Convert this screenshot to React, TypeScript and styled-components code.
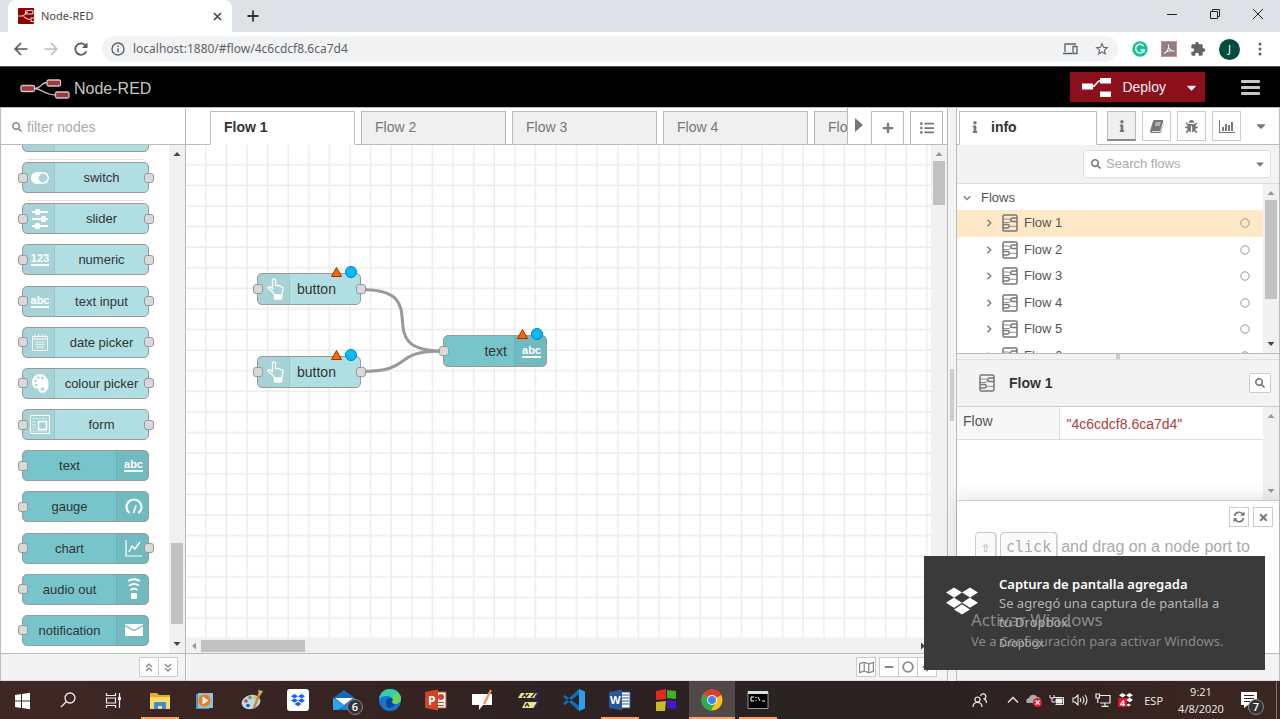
import React from 'react';
import styled, { createGlobalStyle, css } from 'styled-components';
import {
  FaBug,
  FaCaretDown,
  FaDropbox,
  FaInfo,
  FaListUl,
  FaPlus,
  FaMinus,
  FaSearch,
  FaTimes,
  FaRegMap,
} from 'react-icons/fa';
import { MdExtension, MdStarBorder } from 'react-icons/md';

const sans = '"Liberation Sans", Arial, sans-serif';
const system = '"Noto Sans", "Open Sans", sans-serif';
const line = '#bbbbbb';
const panel = '#f3f3f3';

const GlobalStyle = createGlobalStyle`
  * { box-sizing: border-box; }
  body { margin: 0; font: 14px/20px ${sans}; color: #555; background: #fff; }
  button { font: inherit; color: inherit; background: none; border: 0; padding: 0; cursor: pointer; }
  input { font: inherit; color: inherit; background: none; border: 0; padding: 0; outline: 0; min-width: 0; }
  input::placeholder { color: #aaa; opacity: 1; }
  ul { margin: 0; padding: 0; list-style: none; }
  svg { display: block; flex: none; }
`;

const Page = styled.div`
  position: relative;
  display: flex;
  flex-direction: column;
  height: 100vh;
  overflow: hidden;
`;

/* ---------- browser window ---------- */

const TabStrip = styled.div`
  display: flex;
  height: 32px;
  flex: none;
  padding: 0 1px 0 8px;
  background: #dee1e6;
  font-family: ${system};
`;

const BrowserTab = styled.div`
  display: flex;
  align-items: center;
  width: 224px;
  padding: 0 10px;
  gap: 7px;
  border-radius: 8px 8px 0 0;
  background: #fff;
  color: #45494d;
  font-size: 11px;
  span { flex: 1; }
`;

const StripButton = styled.button<{ $width: number }>`
  display: flex;
  align-items: center;
  justify-content: center;
  width: ${(p) => p.$width}px;
  color: #222;
`;

const WindowControls = styled.div`
  display: flex;
  height: 27px;
  margin-left: auto;
`;

const AddressRow = styled.div`
  display: flex;
  align-items: center;
  height: 34px;
  flex: none;
  padding: 0 13px 0 6px;
  background: #fff;
  font-family: ${system};
  color: #5f6368;
`;

const NavButton = styled.button<{ $faded?: boolean }>`
  display: flex;
  justify-content: center;
  width: 30px;
  color: ${(p) => (p.$faded ? '#bcbec1' : '#55595e')};
`;

const AddressBox = styled.label`
  display: flex;
  align-items: center;
  flex: 1;
  height: 26px;
  margin-left: 6px;
  padding: 0 8px 0 9px;
  gap: 8px;
  border-radius: 13px;
  background: #f1f3f4;
  font-size: 12px;
  input { flex: 1; }
`;

const Extensions = styled.div`
  display: flex;
  align-items: center;
  gap: 13px;
  margin-left: 14px;
`;

const Avatar = styled.span`
  display: flex;
  align-items: center;
  justify-content: center;
  width: 21px;
  height: 21px;
  border-radius: 50%;
  background: #004d40;
  color: #fff;
  font-size: 11px;
`;

/* ---------- editor header ---------- */

const Header = styled.header`
  display: flex;
  align-items: center;
  height: 42px;
  flex: none;
  padding: 0 20px;
  border-top: 1px solid #555;
  border-bottom: 1px solid ${line};
  background: #000;
`;

const Brand = styled.div`
  display: flex;
  align-items: center;
  flex: 1;
  gap: 4px;
  padding-top: 4px;
  color: #c7c7c7;
  font-size: 16px;
`;

const DeployGroup = styled.div`
  display: flex;
  height: 30px;
  margin-right: 36px;
  background: #8c101c;
  color: #eee;
`;

const DeployButton = styled.button`
  display: flex;
  align-items: center;
  gap: 11px;
  padding: 0 12px;
`;

const DeployMenu = styled.button`
  display: flex;
  align-items: center;
  justify-content: center;
  width: 27px;
`;

const MenuButton = styled.button`
  display: flex;
  flex-direction: column;
  gap: 3px;
  width: 19px;
  i { height: 3px; background: #c7c7c7; border-radius: 1px; }
`;

/* ---------- editor shell ---------- */

const Editor = styled.main`
  display: grid;
  grid-template-columns: 186px minmax(0, 1fr) 9px 323px;
  flex: 1;
  min-height: 0;
  background: #fff;
`;

const Pane = styled.section`
  display: flex;
  flex-direction: column;
  min-width: 0;
  min-height: 0;
  border-right: 1px solid ${line};
`;

const PalettePane = styled(Pane)`
  border-left: 1px solid ${line};
`;

const Footer = styled.footer<{ $inset?: boolean }>`
  display: flex;
  align-items: center;
  justify-content: flex-end;
  height: 28px;
  flex: none;
  padding: 0 ${(p) => (p.$inset ? 10 : 7)}px;
  border-top: 1px solid ${line};
  border-bottom: 1px solid #ddd;
  background: ${panel};
`;

const FooterButton = styled.button`
  display: flex;
  align-items: center;
  justify-content: center;
  width: 20px;
  height: 20px;
  border: 1px solid #ccc;
  background: #fff;
  color: #888;
  & + & { margin-left: -1px; }
`;

const MapButton = styled(FooterButton)`
  margin-right: 4px;
`;

const Separator = styled.div`
  display: flex;
  align-items: center;
  justify-content: center;
  border-right: 1px solid ${line};
  background: ${panel};
  &::after { content: ''; width: 4px; height: 52px; background: #ccc; border-radius: 1px; }
`;

/* ---------- scroll bars ---------- */

const ScrollTrack = styled.div<{ $row?: boolean }>`
  display: flex;
  flex: none;
  flex-direction: ${(p) => (p.$row ? 'row' : 'column')};
  align-items: center;
  justify-content: space-between;
  ${(p) => (p.$row ? 'height: 14px; padding: 0 4px;' : 'width: 16px; padding: 5px 0;')}
  background: #f1f1f1;
`;

const ScrollRoom = styled.div<{ $row?: boolean; $start: number; $size: number }>`
  flex: 1;
  display: flex;
  &::before {
    content: '';
    background: #c1c1c1;
    ${(p) =>
      p.$row
        ? css`width: ${p.$size}px; height: 12px; margin-left: ${p.$start}px;`
        : css`width: 12px; height: ${p.$size}px; margin-top: ${p.$start}px;`}
  }
`;

type Dir = 'up' | 'down' | 'left' | 'right';
const arrowTurn: Record<Dir, number> = { up: 0, right: 90, down: 180, left: 270 };

function Arrow({ dir, faded }: { dir: Dir; faded?: boolean }) {
  return (
    <svg width="8" height="8" viewBox="0 0 8 8">
      <path d="M4 2 7.5 6H.5Z" fill={faded ? '#999' : '#444'} transform={`rotate(${arrowTurn[dir]} 4 4)`} />
    </svg>
  );
}

function ScrollBar(props: { row?: boolean; start: number; size: number; first?: boolean; last?: boolean }) {
  return (
    <ScrollTrack $row={props.row}>
      <Arrow dir={props.row ? 'left' : 'up'} faded={props.first} />
      <ScrollRoom $row={props.row} $start={props.start} $size={props.size} />
      <Arrow dir={props.row ? 'right' : 'down'} faded={props.last} />
    </ScrollTrack>
  );
}

/* ---------- palette ---------- */

const FilterRow = styled.label`
  display: flex;
  align-items: center;
  gap: 5px;
  height: 37px;
  flex: none;
  padding: 1px 11px 0;
  border-bottom: 1px solid ${line};
  color: #888;
  input { flex: 1; }
`;

const ScrollArea = styled.div`
  display: flex;
  flex: 1;
  min-height: 0;
  overflow: hidden;
`;

const PaletteList = styled.ul`
  display: flex;
  flex-direction: column;
  justify-content: space-between;
  flex: 1;
  margin-top: -24px;
  padding: 0 20px 7px 21px;
`;

const NodeBox = styled.div<{ $dark?: boolean; $small?: boolean }>`
  position: relative;
  display: flex;
  flex-direction: ${(p) => (p.$dark ? 'row-reverse' : 'row')};
  height: ${(p) => (p.$small ? 31 : 32)}px;
  flex: none;
  border: 1px solid #999;
  border-radius: 5px;
  background: ${(p) => (p.$dark ? '#77c5cb' : '#b0dfe3')};
  color: #333;
  font-size: ${(p) => (p.$small ? 13 : 14)}px;
  line-height: ${(p) => (p.$small ? 30 : 30)}px;
`;

const NodeIcon = styled.span<{ $dark?: boolean }>`
  display: flex;
  align-items: center;
  justify-content: center;
  width: 32px;
  ${(p) => (p.$dark ? 'padding-left: 2px; border-left' : 'padding-left: 3px; border-right')}: 1px solid rgba(0, 0, 0, 0.06);
  background: rgba(0, 0, 0, 0.05);
  color: #fff;
`;

const NodeLabel = styled.span<{ $align?: string }>`
  flex: 1;
  text-align: ${(p) => p.$align ?? 'center'};
  padding: 0 ${(p) => (p.$align ? 7 : 0)}px;
  white-space: nowrap;
`;

const Port = styled.i<{ $side: 'left' | 'right' }>`
  position: absolute;
  top: calc(50% - 5px);
  ${(p) => (p.$side === 'left' ? 'left: -5px' : 'right: -6px')};
  width: 10px;
  height: 10px;
  border: 1px solid #999;
  border-radius: 3px;
  background: #d9d9d9;
`;

const PaletteItem = styled.li<{ $ruled?: boolean }>`
  position: relative;
  ${(p) =>
    p.$ruled &&
    css`
      &::before {
        content: '';
        position: absolute;
        top: -3px;
        left: 5px;
        right: 5px;
        height: 1px;
        background: #fbdcc8;
      }
    `}
`;

const Word = styled.span`
  padding-bottom: 1px;
  border-bottom: 2px solid #fff;
  font: bold 11px/10px ${sans};
`;

const icons: Record<string, React.ReactNode> = {
  blank: null,
  switch: (
    <svg width="18" height="12" viewBox="0 0 18 12">
      <rect width="18" height="12" rx="6" fill="#fff" />
      <circle cx="12" cy="6" r="4.4" fill="#a7d4d8" />
    </svg>
  ),
  slider: (
    <svg width="16" height="20" viewBox="0 0 16 20" fill="#fff">
      <path d="M0 2h16v2H0zM0 9h16v2H0zM0 16h16v2H0z" />
      <rect x="3" width="5" height="6" rx="1.5" />
      <rect x="9" y="7" width="5" height="6" rx="1.5" />
      <rect x="3" y="14" width="5" height="6" rx="1.5" />
    </svg>
  ),
  numeric: <Word>123</Word>,
  abc: <Word>abc</Word>,
  date: (
    <svg width="16" height="17" viewBox="0 0 16 17" fill="none" stroke="#fff">
      <path d="M.5 2.5h15v14H.5zM.5 5h15M3 .5V3M6.5.5V3M10 .5V3M13 .5V3" />
      <path d="M3 8h10M3 10.5h10M3 13h10M5.5 7v8M8 7v8M10.5 7v8" opacity=".45" />
    </svg>
  ),
  colour: (
    <svg width="17" height="19" viewBox="0 0 17 19">
      <path
        d="M8 0C3.5 0 0 3.8 0 8.3c0 4.2 2.5 6 5 6.2 2 .2 1.5 1.8 2.2 3 .6 1.1 2 1.5 4 1.3 3.4-.4 5.800-4.500 5.300-9.300C16 4 12.600 0 8 0Z"
        fill="#fff"
      />
      <g fill="#a7d4d8">
        <circle cx="4" cy="11" r="1.3" />
        <circle cx="3.6" cy="7" r="1.3" />
        <circle cx="6.3" cy="3.8" r="1.3" />
        <circle cx="10.3" cy="4" r="1.3" />
        <circle cx="10.5" cy="15" r="1.8" />
      </g>
    </svg>
  ),
  form: (
    <svg width="20" height="19" viewBox="0 0 20 19" fill="none" stroke="#fff">
      <path d="M.5.5h19v18H.5z" />
      <path d="M8.5 6.5h8v8h-8z" strokeWidth="1.5" />
      <path d="M2.5 3.5h15M2.5 16h15" strokeDasharray="2 1" opacity=".7" />
      <path d="M2.5 7H6M2.5 10H6M2.5 13H6" opacity=".7" />
    </svg>
  ),
  gauge: (
    <svg width="18" height="17" viewBox="0 0 18 17" fill="none" stroke="#fff">
      <path d="M4.500 15A7.500 7.500 0 1 1 13.500 15" strokeWidth="2.2" />
      <path d="M8.500 15 11 7.500" strokeWidth="1.8" />
    </svg>
  ),
  chart: (
    <svg width="18" height="17" viewBox="0 0 18 17" fill="none" stroke="#fff" strokeWidth="1.2">
      <path d="M1 0v16h16" />
      <path d="M4 12l3-6 3 3 5-7" strokeWidth="1.600" />
    </svg>
  ),
  audio: (
    <svg width="16" height="22" viewBox="0 0 16 22" fill="none" stroke="#fff" strokeWidth="2">
      <path d="M2 3Q8-.5 14 3M3 7.5Q8 4.500 13 7.500M4.500 12Q8 9.500 11.500 12" />
      <rect x="5" y="15" width="6" height="6" rx="1" fill="#fff" stroke="none" />
    </svg>
  ),
  mail: (
    <svg width="18" height="12" viewBox="0 0 18 12">
      <path d="M0 0h18v12H0z" fill="#fff" />
      <path d="M0 1.500 9 6.500 18 1.500" fill="none" stroke="#6eb7bc" strokeWidth="1.2" />
    </svg>
  ),
  hand: (
    <svg width="17" height="22" viewBox="0 0 17 22" fill="none" stroke="#fff" strokeWidth="1.3" strokeLinejoin="round">
      <path d="M5.500 11.500V2.200C5.500.4 8.500.4 8.500 2.200V7.500c1-.6 2-.4 2.600.4 1-.4 1.900-.2 2.300.7 1.500-.1 2.600.6 2.600 2.400L15 17H7.500L5.800 14 1.500 10.800C.2 9.500 1.800 8 3.200 9l2.300 1.600" />
      <path d="M7.500 17.500h7.200V21H7.500z" fill="#fff" />
    </svg>
  ),
};

const palette = [
  { label: '', icon: 'blank' },
  { label: 'switch', icon: 'switch', ruled: true },
  { label: 'slider', icon: 'slider', ruled: true },
  { label: 'numeric', icon: 'numeric' },
  { label: 'text input', icon: 'abc' },
  { label: 'date picker', icon: 'date' },
  { label: 'colour picker', icon: 'colour' },
  { label: 'form', icon: 'form' },
  { label: 'text', icon: 'abc', dark: true },
  { label: 'gauge', icon: 'gauge', dark: true },
  { label: 'chart', icon: 'chart', dark: true, output: true },
  { label: 'audio out', icon: 'audio', dark: true },
  { label: 'notification', icon: 'mail', dark: true },
];

function DoubleChevron({ down }: { down?: boolean }) {
  return (
    <svg width="8" height="9" viewBox="0 0 8 9" fill="none" stroke="#888" strokeWidth="1.3">
      <path d={down ? 'M1 1l3 3 3-3M1 5l3 3 3-3' : 'M1 4l3-3 3 3M1 8l3-3 3 3'} />
    </svg>
  );
}

function Palette() {
  return (
    <PalettePane>
      <FilterRow>
        <FaSearch size={10} />
        <input placeholder="filter nodes" aria-label="filter nodes" />
      </FilterRow>
      <ScrollArea>
        <PaletteList>
          {palette.map((n) => (
            <PaletteItem key={n.label} $ruled={n.ruled}>
              <NodeBox $dark={n.dark} $small>
                <NodeIcon $dark={n.dark}>{icons[n.icon]}</NodeIcon>
                <NodeLabel>{n.label}</NodeLabel>
                {n.label && <Port $side="left" />}
                {n.label && (!n.dark || n.output) && <Port $side="right" />}
              </NodeBox>
            </PaletteItem>
          ))}
        </PaletteList>
        <ScrollBar start={385} size={81} />
      </ScrollArea>
      <Footer>
        <FooterButton aria-label="collapse all"><DoubleChevron /></FooterButton>
        <FooterButton aria-label="expand all"><DoubleChevron down /></FooterButton>
      </Footer>
    </PalettePane>
  );
}

/* ---------- workspace ---------- */

const TabBar = styled.div`
  display: flex;
  align-items: flex-end;
  height: 37px;
  flex: none;
  border-bottom: 1px solid ${line};
`;

const Tabs = styled.div`
  display: flex;
  flex: 1;
  gap: 6px;
  min-width: 0;
  margin-bottom: -1px;
  padding-left: 24px;
  overflow: hidden;
`;

const Tab = styled.button<{ $active?: boolean }>`
  width: 145px;
  flex: none;
  height: 34px;
  padding: 0 13px 2px;
  border: 1px solid ${line};
  border-bottom-color: ${(p) => (p.$active ? '#fff' : line)};
  background: ${(p) => (p.$active ? '#fff' : '#f0f0f0')};
  color: ${(p) => (p.$active ? '#333' : '#777')};
  font-weight: ${(p) => (p.$active ? 'bold' : 'normal')};
  text-align: left;
`;

const TabScroll = styled.button`
  display: flex;
  align-items: center;
  justify-content: center;
  width: 22px;
  height: 36px;
  padding-bottom: 2px;
  border-left: 1px solid ${line};
`;

const TabTool = styled.button`
  display: flex;
  align-items: center;
  justify-content: center;
  width: 33px;
  height: 33px;
  margin: 0 4px 0 2px;
  border: 1px solid ${line};
  border-bottom: 0;
  color: #777;
`;

const CanvasColumn = styled.div`
  display: flex;
  flex-direction: column;
  flex: 1;
  min-width: 0;
`;

const Canvas = styled.div`
  position: relative;
  flex: 1;
  min-height: 0;
  overflow: hidden;
`;

const CanvasSvg = styled.svg`
  position: absolute;
  inset: 0;
  width: 100%;
  height: 100%;
`;

const FlowNode = styled(NodeBox)<{ $x: number; $y: number }>`
  position: absolute;
  left: ${(p) => p.$x}px;
  top: ${(p) => p.$y}px;
  width: 104px;
`;

const Status = styled.svg`
  position: absolute;
  top: -9px;
  right: 2px;
`;

const nodes = [
  { label: 'button', x: 71, y: 128, icon: 'hand' },
  { label: 'button', x: 71, y: 211, icon: 'hand' },
  { label: 'text', x: 257, y: 190, icon: 'abc', dark: true },
];

function Workspace() {
  return (
    <Pane>
      <TabBar>
        <Tabs>
          {[1, 2, 3, 4, 5].map((n) => (
            <Tab key={n} $active={n === 1}>Flow {n}</Tab>
          ))}
        </Tabs>
        <TabScroll aria-label="scroll tabs">
          <svg width="8" height="14" viewBox="0 0 8 14"><path d="M0 0l8 7-8 7z" fill="#777" /></svg>
        </TabScroll>
        <TabTool aria-label="add flow"><FaPlus size={12} /></TabTool>
        <TabTool aria-label="list flows"><FaListUl size={14} /></TabTool>
      </TabBar>
      <ScrollArea>
        <CanvasColumn>
          <Canvas>
            <CanvasSvg>
              <defs>
                <pattern id="grid" width="20.6" height="20.6" patternUnits="userSpaceOnUse">
                  <path d="M19.900 0v20.600M0 19.900h20.600" stroke="#ececec" strokeWidth="1.500" />
                </pattern>
              </defs>
              <rect width="100%" height="100%" fill="url(#grid)" />
              <g fill="none" stroke="#999" strokeWidth="3">
                <path d="M175 144.500C253 144.500 180 206 257 206" />
                <path d="M175 226.500C230 226.500 203 206 257 206" />
              </g>
            </CanvasSvg>
            {nodes.map((n) => (
              <FlowNode key={n.y} $x={n.x} $y={n.y} $dark={n.dark}>
                <NodeIcon $dark={n.dark}>{icons[n.icon]}</NodeIcon>
                <NodeLabel $align={n.dark ? 'right' : 'left'}>{n.label}</NodeLabel>
                <Port $side="left" />
                {!n.dark && <Port $side="right" />}
                <Status width="28" height="14" viewBox="0 0 28 14">
                  <path d="M6.500 2.500 11.500 11.500H1.500Z" fill="#ff6600" stroke="#a03000" />
                  <circle cx="21" cy="7" r="5.500" fill="#00bcff" stroke="#0081b5" />
                </Status>
              </FlowNode>
            ))}
          </Canvas>
          <ScrollBar row start={3} size={104} first />
        </CanvasColumn>
        <ScrollBar start={3} size={44} first />
      </ScrollArea>
      <Footer $inset>
        <MapButton aria-label="navigator"><FaRegMap size={15} /></MapButton>
        <FooterButton aria-label="zoom out"><FaMinus size={10} /></FooterButton>
        <FooterButton aria-label="reset zoom">
          <svg width="12" height="12" viewBox="0 0 12 12"><circle cx="6" cy="6" r="4.800" fill="none" stroke="#888" strokeWidth="1.800" /></svg>
        </FooterButton>
        <FooterButton aria-label="zoom in"><FaPlus size={10} /></FooterButton>
      </Footer>
    </Pane>
  );
}

/* ---------- sidebar ---------- */

const SideTabs = styled.div`
  display: flex;
  height: 37px;
  flex: none;
  align-items: flex-end;
  padding-left: 2px;
  border-bottom: 1px solid ${line};
`;

const SideTab = styled.button`
  display: flex;
  align-items: center;
  gap: 10px;
  width: 138px;
  height: 34px;
  margin: 0 10px -1px 0;
  padding: 0 9px 2px;
  border: 1px solid ${line};
  border-bottom-color: #fff;
  background: #fff;
  color: #333;
  font-weight: bold;
  svg { color: #777; }
`;

const SideTool = styled.button<{ $active?: boolean }>`
  display: flex;
  align-items: center;
  justify-content: center;
  width: 29px;
  height: 30px;
  margin: 0 6px 3px 0;
  border: 1px solid ${(p) => (p.$active ? '#bbb' : '#ccc')};
  ${(p) => p.$active && 'border-bottom: 2px solid #888;'}
  background: ${(p) => (p.$active ? '#efefef' : '#fff')};
  color: #777;
`;

const SideMore = styled.button`
  display: flex;
  align-items: center;
  justify-content: center;
  flex: 1;
  height: 36px;
  padding-right: 4px;
  color: #777;
`;

const SearchRow = styled.div`
  display: flex;
  justify-content: flex-end;
  align-items: center;
  height: 39px;
  flex: none;
  padding-right: 8px;
  border-bottom: 1px solid #ddd;
  background: ${panel};
`;

const SearchBox = styled.label`
  display: flex;
  align-items: center;
  gap: 5px;
  width: 188px;
  height: 28px;
  padding: 0 4px 0 7px;
  border: 1px solid #ddd;
  border-radius: 3px;
  background: #fff;
  color: #777;
  font-size: 13px;
  input { flex: 1; }
`;

const TreeArea = styled(ScrollArea)`
  flex: none;
  height: 169px;
`;

const Tree = styled.div`
  flex: 1;
  font-size: 13px;
`;

const TreeRoot = styled.div`
  display: flex;
  align-items: center;
  gap: 10px;
  height: 26px;
  padding: 2px 0 0 6px;
`;

const TreeList = styled.ul`
  display: grid;
  grid-auto-rows: 1fr;
  height: 159px;
`;

const TreeItem = styled.li<{ $active?: boolean }>`
  display: flex;
  align-items: center;
  padding: 0 13px 0 28px;
  background: ${(p) => (p.$active ? '#ffe8c5' : '#fff')};
  > svg:first-child { margin-right: 9px; }
  span { flex: 1; padding-left: 6px; }
`;

const Splitter = styled.div`
  display: flex;
  justify-content: center;
  height: 7px;
  flex: none;
  border-top: 1px solid ${line};
  border-bottom: 1px solid #ddd;
  background: ${panel};
  &::after { content: ''; width: 4px; background: #ccc; }
`;

const DetailHead = styled.div`
  display: flex;
  align-items: center;
  gap: 14px;
  height: 47px;
  flex: none;
  padding: 0 8px 0 22px;
  border-bottom: 1px solid #ccc;
  background: ${panel};
  color: #333;
  strong { flex: 1; }
`;

const IconButton = styled.button`
  display: flex;
  align-items: center;
  justify-content: center;
  width: 20px;
  height: 20px;
  border: 1px solid #ccc;
  background: #fff;
  color: #777;
`;

const DetailButton = styled(IconButton)`
  width: 22px;
  border-radius: 2px;
`;

const DetailArea = styled(ScrollArea)`
  flex: none;
  height: 93px;
`;

const DetailBody = styled.div`
  flex: 1;
`;

const DetailTable = styled.table`
  width: 100%;
  border-collapse: collapse;
  th, td { height: 32px; padding: 0 6px; border-bottom: 1px solid #ddd; text-align: left; font-weight: normal; }
  th { width: 102px; padding-bottom: 3px; border-right: 1px solid #ddd; background: #f7f7f7; }
  td { padding: 3px 7px 0; color: #b03d3d; }
`;

const Tips = styled.div`
  flex: 1;
  min-height: 0;
  overflow: hidden;
  padding: 6px 6px 0 18px;
  border-top: 1px solid #ccc;
  box-shadow: 0 -4px 16px rgba(0, 0, 0, 0.1);
  background: #fff;
  color: #aaa;
`;

const TipTools = styled.div`
  display: flex;
  justify-content: flex-end;
  gap: 4px;
`;

const TipText = styled.p`
  display: flex;
  align-items: center;
  gap: 4px;
  margin: 5px 0 0;
  font-size: 16px;
  white-space: nowrap;
`;

const Key = styled.kbd`
  display: flex;
  align-items: center;
  height: 30px;
  padding: 0 5px;
  border: 1px solid #ccc;
  border-radius: 4px;
  box-shadow: 1px 0 0 #ddd;
  background: #fafafa;
  font: 15px "DejaVu Sans Mono", monospace;
`;

function FlowIcon() {
  return (
    <svg width="16" height="18" viewBox="0 0 16 18" fill="none" stroke="#777">
      <rect x="1" y="1" width="14" height="16" rx="1.500" strokeWidth="1.500" />
      <path d="M15 4h-4.500a1.500 1.500 0 0 0 0 3.500H15M1 10.500h4.500a1.500 1.500 0 0 1 0 3.500H1" strokeWidth="1.400" />
      <path d="M1 5h5l3 .7M1 8.500h6l2.500-2M7 12.300h8" strokeWidth="1" opacity=".8" />
    </svg>
  );
}

function Angle({ down }: { down?: boolean }) {
  return (
    <svg width="8" height="8" viewBox="0 0 8 8" fill="none" stroke="#777" strokeWidth="1.300">
      <path d={down ? 'M.8 2.200 4 5.600 7.200 2.200' : 'M2.400.8 5.800 4 2.400 7.200'} />
    </svg>
  );
}

function Refresh() {
  return (
    <svg width="12" height="12" viewBox="0 0 12 12" fill="none" stroke="#777" strokeWidth="1.700">
      <path d="M1.500 5A4.600 4.600 0 0 1 9.600 3M10.500 7A4.600 4.600 0 0 1 2.400 9" />
      <path d="M11.500.5v4.300H7.200zM.5 11.500V7.200h4.300z" fill="#777" stroke="none" />
    </svg>
  );
}

function BarChart() {
  return (
    <svg width="16" height="13" viewBox="0 0 16 13" fill="#777">
      <path d="M0 0h1v12h15v1H0zM3 7h2v4H3zM6 4h2v7H6zM9 5h2v6H9zM12 2h2v9h-2z" />
    </svg>
  );
}

function Book() {
  return (
    <svg width="14" height="13" viewBox="0 0 14 13">
      <path d="M4.500 0H12c1 0 1.500.8 1.200 1.600L10.600 10c-.2.600-.8 1-1.400 1H2.200c-.6 0-.7.700 0 .800h7.600c.8 0 1.300-.4 1.500-1L13.800 3v1l-2.300 7.600c-.3.900-1 1.400-2 1.400H2C.5 13-.3 11.700.2 10.300L3 1.200C3.200.5 3.800 0 4.500 0Z" fill="#777" />
      <path d="M5.600 3h5M5 5h5" stroke="#fff" strokeWidth=".9" />
    </svg>
  );
}

function Sidebar() {
  return (
    <Pane>
      <SideTabs>
        <SideTab><FaInfo size={12} />info</SideTab>
        <SideTool $active aria-label="info"><FaInfo size={12} /></SideTool>
        <SideTool aria-label="help"><Book /></SideTool>
        <SideTool aria-label="debug"><FaBug size={13} /></SideTool>
        <SideTool aria-label="dashboard"><BarChart /></SideTool>
        <SideMore aria-label="more"><FaCaretDown size={14} /></SideMore>
      </SideTabs>
      <SearchRow>
        <SearchBox>
          <FaSearch size={10} />
          <input placeholder="Search flows" aria-label="Search flows" />
          <FaCaretDown size={12} />
        </SearchBox>
      </SearchRow>
      <TreeArea>
        <Tree>
          <TreeRoot><Angle down />Flows</TreeRoot>
          <TreeList>
            {[1, 2, 3, 4, 5, 6].map((n) => (
              <TreeItem key={n} $active={n === 1}>
                <Angle />
                <FlowIcon />
                <span>Flow {n}</span>
                <svg width="10" height="10" viewBox="0 0 10 10"><circle cx="5" cy="5" r="4.200" fill="none" stroke="#999" /></svg>
              </TreeItem>
            ))}
          </TreeList>
        </Tree>
        <ScrollBar start={3} size={99} first />
      </TreeArea>
      <Splitter />
      <DetailHead>
        <FlowIcon />
        <strong>Flow 1</strong>
        <DetailButton aria-label="find"><FaSearch size={10} /></DetailButton>
      </DetailHead>
      <DetailArea>
        <DetailBody>
          <DetailTable>
            <tbody>
              <tr><th scope="row">Flow</th><td>"4c6cdcf8.6ca7d4"</td></tr>
            </tbody>
          </DetailTable>
        </DetailBody>
        <ScrollBar start={0} size={0} first last />
      </DetailArea>
      <Tips>
        <TipTools>
          <IconButton aria-label="next tip"><Refresh /></IconButton>
          <IconButton aria-label="close tips"><FaTimes size={11} /></IconButton>
        </TipTools>
        <TipText><Key>⇧</Key><Key>click</Key>and drag on a node port to</TipText>
      </Tips>
      <Footer />
    </Pane>
  );
}

/* ---------- desktop ---------- */

const Toast = styled.aside`
  position: absolute;
  right: 15px;
  bottom: 49px;
  display: flex;
  gap: 21px;
  width: 341px;
  height: 114px;
  padding: 19px 16px 0 22px;
  background: #3a3a3a;
  color: #b4b4b4;
  font: 13px/19px ${system};
  > svg { margin-top: 10px; }
  strong { display: block; color: #fff; font-weight: 600; }
  p { margin: 0; }
  small { display: block; font-size: 11px; line-height: 22px; }
`;

const Activation = styled.div`
  position: absolute;
  right: 51px;
  bottom: 68px;
  width: 258px;
  color: rgba(165, 165, 165, 0.75);
  font: 13px/20px ${system};
  white-space: nowrap;
  strong { display: block; font-size: 17px; font-weight: normal; line-height: 22px; }
`;

const Taskbar = styled.nav`
  display: flex;
  align-items: center;
  height: 38px;
  flex: none;
  margin-left: -1px;
  background: linear-gradient(90deg, #3f2824, #382422 25%, #2c2223 50%, #2a2222 75%, #3a2520 92%, #3a2520);
  color: #eee;
  font: 11px/19px "Open Sans", sans-serif;
`;

const TaskButton = styled.button<{ $state?: 'open' | 'front' }>`
  position: relative;
  display: flex;
  align-items: center;
  justify-content: center;
  width: 46px;
  height: 38px;
  ${(p) => p.$state === 'front' && 'background: #514848;'}
  ${(p) =>
    p.$state &&
    css`
      &::after {
        content: '';
        position: absolute;
        bottom: 0;
        left: ${p.$state === 'front' ? 0 : 4}px;
        right: ${p.$state === 'front' ? 0 : 4}px;
        height: 2px;
        background: #f5a070;
      }
    `}
`;

const Tray = styled.div`
  display: flex;
  align-items: center;
  gap: 7px;
  height: 100%;
  margin-left: auto;
  padding-right: 3px;
  > svg:first-child { margin-right: 12px; }
`;

const Clock = styled.time`
  width: 62px;
  line-height: 17px;
  text-align: center;
`;

const Badge = styled.span`
  position: absolute;
  right: 4px;
  bottom: 4px;
  width: 16px;
  height: 16px;
  border: 1px solid #888;
  border-radius: 50%;
  background: #333;
  color: #fff;
  font-weight: 600;
  line-height: 14px;
  text-align: center;
`;

const Notices = styled(TaskButton)`
  width: 38px;
  padding-right: 15px;
  border-right: 1px solid #777;
  ${Badge} { right: 12px; }
`;

const taskIcons: { name: string; state?: 'open' | 'front'; badge?: string; art: React.ReactNode }[] = [
  { name: 'Start', art: <path d="M4 6l6-1v6.500H4zM11 4.900 19 3.800v7.700h-8zM4 12.500h6V19l-6-1zM11 12.500h8v7.700l-8-1.100z" fill="#fff" /> },
  { name: 'Search', art: <g fill="none" stroke="#eee" strokeWidth="1.300"><circle cx="13" cy="9" r="5" /><path d="M9.500 12.500 4 18" /></g> },
  { name: 'Task view', art: <g fill="none" stroke="#eee" strokeWidth="1.200"><path d="M3.500 4v2.500h9V4M3.500 9h9v5h-9zM3.500 19v-2.500h9V19M16.500 4v15" /><path d="M15 8h3v3h-3z" fill="#eee" stroke="none" /></g> },
  { name: 'Explorer', state: 'open', art: <g><path d="M1 4h7l2 2h11v14H1z" fill="#e8a820" /><path d="M1 8h20v12H1z" fill="#ffd968" /><path d="M5 20v-7h12v7h-4v-3H9v3z" fill="#3c8fd6" /></g> },
  { name: 'Media player', art: <g><path d="M1 5h13v15H1z" fill="#5793b5" /><path d="M3 4h15v15H3z" fill="#8fc1db" /><circle cx="9.500" cy="11.500" r="6" fill="#ee7a1c" /><path d="M7.500 7.500l6 4-6 4z" fill="#fff" /></g> },
  { name: 'Paint', art: <g><ellipse cx="10" cy="13" rx="9.500" ry="7" fill="#b9d9ea" transform="rotate(-15 10 13)" /><circle cx="5" cy="12" r="1.800" fill="#d24636" /><circle cx="9" cy="8.500" r="1.800" fill="#58a84a" /><circle cx="7" cy="16.500" r="1.800" fill="#2d5ca8" /><circle cx="14" cy="8.500" r="1.700" fill="#f0c030" /><path d="M19 3 13 19" stroke="#c9853d" strokeWidth="2.400" /><path d="M17 1l5 1-3 5z" fill="#d8ab76" /></g> },
  { name: 'Dropbox', art: <g><rect width="22" height="22" rx="3" fill="#fff" /><path d="M7.500 5 4 7.200l3.500 2.200L11 7.200zM14.500 5 11 7.200l3.500 2.200L18 7.200zM7.500 9.400 4 11.600l3.500 2.200L11 11.600zM14.500 9.400 11 11.600l3.500 2.200L18 11.600zM11 12.800l-3.500 2.200L11 17.200l3.500-2.200z" fill="#1261fe" /></g> },
  { name: 'Mail', badge: '6', art: <g><path d="M0 9l11-8 11 8v12H0z" fill="#1469b8" /><path d="M2 9h18l-9 7z" fill="#fff" /><path d="M0 9l12 8-8 4H0z" fill="#2ca5ea" /><path d="M22 9 8 19l4 2h10z" fill="#1b83d8" /></g> },
  { name: 'Edge', art: <g><circle cx="11" cy="11" r="11" fill="#1577cf" /><path d="M0 10C1 3 6 0 11 0c7 0 11 5 11 9 0 4-3 6-6 6-4 0-3-2-2-4-1-4-8-6-14-1z" fill="#3bc9b0" /><path d="M22 9c0 4-3 6-6 6-4 0-3-2-2-4C13 5 17 3 20 5z" fill="#64d75b" /><path d="M7 14c0-4 3-6 7-4-1 2-2 5 2 5-2 5-9 6-9-1z" fill="#0d4791" /></g> },
  { name: 'PowerPoint', art: <g><path d="M11 3h10v16H11z" fill="#fff" stroke="#d04423" /><circle cx="16" cy="8" r="3" fill="#d04423" /><path d="M13 13h6v1h-6zM13 16h6v1h-6z" fill="#d04423" /><path d="M0 3l13-2.500v21L0 19z" fill="#d04423" /><text x="3" y="15.500" fontSize="12" fontWeight="bold" fill="#fff">P</text></g> },
  { name: 'Notes', art: <g><path d="M1 5h20v11h-9l-4 5v-5H1z" fill="#fff" /><path d="M20 1l-7 14" stroke="#e8935b" strokeWidth="2.200" /></g> },
  { name: 'Simulator', art: <g><path d="M4 4h16l-3 5H1zM8 13h12l-3 6H5z" fill="#e4eb86" /><path d="M5 8.500l3-3.500 1 3 3-3M14 8.500l5-5.500M8 17.500l2-3 2 3" stroke="#333" strokeWidth="1.500" fill="none" /><path d="M17 19l5-7M18 10l3-6" stroke="#2b2b9a" strokeWidth="1.500" /></g> },
  { name: 'Code', art: <g><path d="M16 0l6 2.500v17L16 22z" fill="#2aa3ec" /><path d="M0 7.500 2 6l14 11v5zM0 14.500 2 16 16 5V0z" fill="#0c72ba" /></g> },
  { name: 'Word', state: 'open', art: <g><path d="M11 3h10v16H11z" fill="#fff" stroke="#2b579a" /><path d="M13 6h7M13 9h7M13 12h7M13 15h7" stroke="#2b579a" /><path d="M0 3l13-2.500v21L0 19z" fill="#2b579a" /><text x="1" y="15" fontSize="11" fontWeight="bold" fill="#fff">W</text></g> },
  { name: 'Blocks', art: <g><path d="M1 2l10-2v10L1 11z" fill="#e02a1e" /><path d="M12 1l9 1v8l-9-1z" fill="#3eb21f" /><path d="M1 13l10-1-1 10H1z" fill="#c9bc1e" /><path d="M12 11l9 1v8l-9-1z" fill="#4714cf" /></g> },
  { name: 'Chrome', state: 'front', art: <g><circle cx="11" cy="11" r="10.500" fill="#fbc116" /><path d="M11 11 2 5.500A10.500 10.500 0 0 1 20.300 6z" fill="#e33b2e" /><path d="M11 11l-9-5.500A10.500 10.500 0 0 0 10 21.500L15 13z" fill="#2da94f" /><circle cx="11" cy="11" r="5" fill="#fff" /><circle cx="11" cy="11" r="4" fill="#4285f4" /></g> },
  { name: 'Terminal', state: 'open', art: <g><path d="M1 2.500h20v17H1z" fill="#000" stroke="#999" /><path d="M1 2h20v3H1z" fill="#ddd" /><path d="M4 8h3M4 8v4h3M9 8v1M9 11v1M11 8l2 4M15 12h3" stroke="#fff" fill="none" /></g> },
];

function DropboxMini() {
  return (
    <svg width="16" height="16" viewBox="0 0 16 16">
      <path d="M4.500 1 1 3.300 4.500 5.600 8 3.300zM11.500 1 8 3.300l3.500 2.300L15 3.300zM11.500 5.600 8 8l3.500 2.300L15 8zM10.500 11.500l-2 1.500 2 1.500 2.500-1.500z" fill="#fff" />
      <path d="M0 6h9v9H0z" fill="#e81123" />
      <text x="2" y="14" fontSize="9" fontWeight="bold" fill="#fff">4</text>
    </svg>
  );
}

export default function App() {
  return (
    <Page>
      <GlobalStyle />
      <TabStrip>
        <BrowserTab>
          <svg width="16" height="16" viewBox="0 0 16 16" fill="none" stroke="#f3dada" strokeWidth="1.100">
            <rect width="16" height="16" rx="1" fill="#8f0000" stroke="none" />
            <path d="M0 8h4c3 0 3-4 6-4M4 8c3 0 3 3.500 8 3.500" />
            <rect x="7.500" y="2.500" width="7.500" height="3.500" rx="1" />
            <path d="M16 10h-3v3.500h3" />
          </svg>
          <span>Node-RED</span>
          <svg width="9" height="9" viewBox="0 0 9 9"><path d="M1 1l7 7M8 1 1 8" stroke="#444" strokeWidth="1.600" /></svg>
        </BrowserTab>
        <StripButton $width={42} aria-label="new tab">
          <svg width="12" height="12" viewBox="0 0 12 12"><path d="M6 .5v11M.5 6h11" stroke="#333" strokeWidth="1.800" /></svg>
        </StripButton>
        <WindowControls>
          <StripButton $width={43} aria-label="minimise">
            <svg width="10" height="10" viewBox="0 0 10 10"><path d="M0 5.500h10" stroke="#222" /></svg>
          </StripButton>
          <StripButton $width={43} aria-label="restore">
            <svg width="10" height="10" viewBox="0 0 10 10" fill="none" stroke="#222"><path d="M.5 2.500h7v7h-7zM2.500 2.500v-2h7v7h-2" /></svg>
          </StripButton>
          <StripButton $width={43} aria-label="close">
            <svg width="10" height="10" viewBox="0 0 10 10"><path d="M0 0l10 10M10 0 0 10" stroke="#222" /></svg>
          </StripButton>
        </WindowControls>
      </TabStrip>
      <AddressRow>
        <NavButton aria-label="back">
          <svg width="14" height="14" viewBox="0 0 14 14" fill="none" stroke="currentColor" strokeWidth="1.700"><path d="M13.500 7H1.500M7 1 1.200 7 7 13" /></svg>
        </NavButton>
        <NavButton $faded aria-label="forward">
          <svg width="14" height="14" viewBox="0 0 14 14" fill="none" stroke="currentColor" strokeWidth="1.700"><path d="M.5 7h12M7 1l5.800 6L7 13" /></svg>
        </NavButton>
        <NavButton aria-label="reload">
          <svg width="14" height="14" viewBox="0 0 14 14" fill="none" stroke="currentColor" strokeWidth="1.800"><path d="M12.300 9.300A5.700 5.700 0 1 1 11.500 3.500" /><path d="M13.500.5v5.500H8z" fill="currentColor" stroke="none" /></svg>
        </NavButton>
        <AddressBox>
          <svg width="14" height="14" viewBox="0 0 14 14" fill="none" stroke="#5f6368" strokeWidth="1.400"><circle cx="7" cy="7" r="6" /><path d="M7 6.200v4.300M7 3.500v1.500" /></svg>
          <input aria-label="address" defaultValue="localhost:1880/#flow/4c6cdcf8.6ca7d4" />
          <svg width="15" height="12" viewBox="0 0 15 12" fill="none" stroke="#5f6368" strokeWidth="1.300"><path d="M13 1H2v8M0 10.500h9M10 3.500h4v7h-4z" /></svg>
          <span />
          <MdStarBorder size={16} />
        </AddressBox>
        <Extensions>
          <svg width="16" height="16" viewBox="0 0 16 16"><circle cx="8" cy="8" r="7.700" fill="#15c39a" /><path d="M11.500 5.200A4.300 4.300 0 1 0 12 9H8.500M12 8.500v3" fill="none" stroke="#fff" strokeWidth="1.500" /></svg>
          <svg width="16" height="16" viewBox="0 0 16 16"><rect x=".5" y=".5" width="15" height="15" fill="#8b8082" stroke="#d98a8a" /><path d="M3 12.500C6 11 8.500 7 7.500 3.500 7 8 10 10.500 13.500 10 10 9 6 10 3 12.500Z" fill="none" stroke="#eee" strokeWidth="1.100" /></svg>
          <MdExtension size={16} />
          <Avatar>J</Avatar>
          <svg width="14" height="14" viewBox="0 0 14 14" fill="#5f6368"><circle cx="7" cy="2" r="1.500" /><circle cx="7" cy="7" r="1.500" /><circle cx="7" cy="12" r="1.500" /></svg>
        </Extensions>
      </AddressRow>
      <Header>
        <Brand>
          <svg width="50" height="20" viewBox="0 0 50 20" fill="#aa3333" stroke="#c7c7c7" strokeWidth="1.300">
            <path d="M14 9.500c8 0 6-6 13-6M14 9.500c9 0 9 6.500 22 6.500" fill="none" />
            <rect x="1" y="6.500" width="13.500" height="6" rx="1.500" />
            <rect x="27" y="1" width="13.500" height="6" rx="1.500" />
            <rect x="35.500" y="13" width="13.500" height="6" rx="1.500" />
          </svg>
          Node-RED
        </Brand>
        <DeployGroup>
          <DeployButton>
            <svg width="29" height="20" viewBox="0 0 29 20" fill="#fff">
              <path d="M0 6.500h11v6H0zM18 1h11v5.500H18zM18 14.500h11V20H18z" />
              <path d="M10 9.500c5 0 4-6 9-6" fill="none" stroke="#fff" strokeWidth="1.500" />
            </svg>
            Deploy
          </DeployButton>
          <DeployMenu aria-label="deploy options"><FaCaretDown size={15} /></DeployMenu>
        </DeployGroup>
        <MenuButton aria-label="menu"><i /><i /><i /></MenuButton>
      </Header>
      <Editor>
        <Palette />
        <Workspace />
        <Separator />
        <Sidebar />
      </Editor>
      <Taskbar>
        {taskIcons.map((t) => (
          <TaskButton key={t.name} $state={t.state} aria-label={t.name}>
            <svg width="22" height="22" viewBox="0 0 22 22">{t.art}</svg>
            {t.badge && <Badge>{t.badge}</Badge>}
          </TaskButton>
        ))}
        <Tray>
          <svg width="16" height="16" viewBox="0 0 16 16" fill="none" stroke="#eee" strokeWidth="1.200"><circle cx="5.500" cy="7.500" r="2.500" /><path d="M1 15c0-6 9-6 9 0M8.500 4a2.700 2.700 0 1 1 3 3.200c2 .2 3 1.500 3 3.800" /></svg>
          <svg width="12" height="8" viewBox="0 0 12 8"><path d="M1 6.500l5-5 5 5" fill="none" stroke="#eee" strokeWidth="1.300" /></svg>
          <svg width="16" height="14" viewBox="0 0 16 14"><path d="M1 10a3 3 0 0 1 2-5c1-4 7-4 8-1 3 0 4 2 4 4v2z" fill="#aaa" /><circle cx="11.500" cy="9.500" r="4.500" fill="#e02030" /><path d="M9.500 7.500l4 4M13.500 7.500l-4 4" stroke="#fff" strokeWidth="1.200" /></svg>
          <svg width="16" height="12" viewBox="0 0 16 12" fill="none" stroke="#eee"><path d="M4.500 3.500h10v7h-8M1 1v3h4V1M3 4v4h3" /><path d="M7 5h6v4H7z" fill="#eee" /></svg>
          <svg width="16" height="12" viewBox="0 0 16 12" fill="none" stroke="#eee" strokeWidth="1.100"><path d="M1 4h2l3-3v10L3 8H1zM8 4q1.500 2 0 4M10.500 2.500q3 3.500 0 7M13 1q4 5 0 10" /></svg>
          <svg width="16" height="14" viewBox="0 0 16 14" fill="none" stroke="#eee" strokeWidth="1.200"><path d="M4 2.500h11v7.500H5M10 10v3M6.500 13.300h7M1 1h3.500v4H1zM2.800 5v5" /></svg>
          <DropboxMini />
          <span>&nbsp;ESP</span>
          <Clock>9:21<br />4/8/2020</Clock>
          <Notices aria-label="notifications">
            <svg width="22" height="22" viewBox="0 0 22 22"><path d="M2 3h16v13H9l-4 3v-3H2z" fill="#fff" /><path d="M5 6.500h10M5 9.500h10M5 12.500h6" stroke="#3a2520" strokeWidth="1.200" /></svg>
            <Badge>7</Badge>
          </Notices>
        </Tray>
      </Taskbar>
      <Toast>
        <FaDropbox size={32} color="#fff" />
        <div>
          <strong>Captura de pantalla agregada</strong>
          <p>Se agregó una captura de pantalla a<br />tu Dropbox.</p>
          <small>Dropbox</small>
        </div>
      </Toast>
      <Activation>
        <strong>Activar Windows</strong>
        Ve a Configuración para activar Windows.
      </Activation>
    </Page>
  );
}
